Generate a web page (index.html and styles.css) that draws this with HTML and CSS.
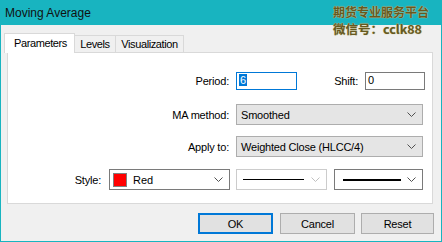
FILE: index.html
```html
<!DOCTYPE html>
<html>
<head>
<meta charset="utf-8">
<link rel="stylesheet" href="styles.css">
</head>
<body>
<div class="window">
  <div class="titlebar">
    <span class="title">Moving Average</span>
    <div class="watermark">
      <div class="wm1">期货专业服务平台</div>
      <div class="wm2">微信号：cclk88</div>
    </div>
  </div>
  <div class="tabs">
    <div class="tab active t1">Parameters</div>
    <div class="tab t2">Levels</div>
    <div class="tab t3">Visualization</div>
  </div>
  <div class="panel">
    <div class="row row1">
      <label class="lbl wide">Period:</label>
      <div class="input focus"><span class="sel">6</span></div>
      <label class="lbl shift">Shift:</label>
      <div class="input shiftin">0</div>
    </div>
    <div class="row row2">
      <label class="lbl wide">MA method:</label>
      <div class="combo full"><span>Smoothed</span><svg class="chev" width="9" height="5" viewBox="0 0 9 5"><polyline points="0.5,0.5 4.5,4.5 8.5,0.5" fill="none" stroke="#505050"/></svg></div>
    </div>
    <div class="row row3">
      <label class="lbl wide">Apply to:</label>
      <div class="combo full"><span>Weighted Close (HLCC/4)</span><svg class="chev" width="9" height="5" viewBox="0 0 9 5"><polyline points="0.5,0.5 4.5,4.5 8.5,0.5" fill="none" stroke="#505050"/></svg></div>
    </div>
    <div class="row row4">
      <label class="lbl short">Style:</label>
      <div class="wcombo color"><span class="swatch"></span><span>Red</span><svg class="chev" width="9" height="5" viewBox="0 0 9 5"><polyline points="0.5,0.5 4.5,4.5 8.5,0.5" fill="none" stroke="#505050"/></svg></div>
      <div class="wcombo line1 disabled"><span class="line thin"></span><svg class="chev" width="9" height="5" viewBox="0 0 9 5"><polyline points="0.5,0.5 4.5,4.5 8.5,0.5" fill="none" stroke="#c0c0c0"/></svg></div>
      <div class="wcombo line2"><span class="line thick"></span><svg class="chev" width="9" height="5" viewBox="0 0 9 5"><polyline points="0.5,0.5 4.5,4.5 8.5,0.5" fill="none" stroke="#505050"/></svg></div>
    </div>
  </div>
  <div class="buttons">
    <button class="btn ok">OK</button>
    <button class="btn cancel">Cancel</button>
    <button class="btn reset">Reset</button>
  </div>
</div>
</body>
</html>
```
FILE: styles.css
```css
* { box-sizing: border-box; }
html, body { margin: 0; padding: 0; background: #f0f0f0; }
body { font-family: "Liberation Sans", Arial, sans-serif; font-size: 11px; color: #000; }

.window {
  width: 442px; height: 242px;
  background: #f0f0f0;
  border: 1px solid #18b4c0;
  border-top: none;
  position: relative;
}
.titlebar {
  height: 25px;
  margin: 0 -1px;
  background: #18b4c0;
  position: relative;
  display: flex;
  align-items: center;
}
.title { font-size: 12px; color: #111; margin-left: 5px; margin-top: 1px; }

.watermark {
  position: absolute;
  right: 13px; top: 3px;
  font-family: "Noto Sans CJK SC", sans-serif;
  font-weight: bold;
  color: #66591f;
  text-shadow: 0 0 1px #cfc89a, 0 0 1px #cfc89a;
  text-align: right;
}
.wm1 { font-size: 12px; line-height: 17px; height: 17px; }
.wm2 { font-size: 12.5px; line-height: 18px; height: 18px; margin-right: 7px; }

.tabs {
  display: flex;
  align-items: flex-end;
  height: 19px;
  margin-top: 8px;
  margin-left: 3px;
  position: relative;
  z-index: 1;
}
.tab {
  height: 17px;
  border: 1px solid #d9d9d9;
  border-bottom: none;
  background: #f0f0f0;
  line-height: 16px;
  font-size: 11px;
  letter-spacing: -0.4px;
  text-align: center;
}
.tab + .tab { border-left: none; }
.t1 { width: 71px; }
.t2 { width: 41px; }
.t3 { width: 68px; }
.tab.active {
  height: 20px;
  margin-bottom: -1px;
  background: #fff;
  line-height: 18px;
  padding-left: 2px;
}

.panel {
  width: 426px; height: 152px;
  margin-left: 6px;
  background: #fff;
  border: 1px solid #d9d9d9;
  padding-top: 19px;
}
.row { display: flex; align-items: center; }
.row2 { margin-top: 14px; }
.row3 { margin-top: 11px; }
.row4 { margin-top: 12px; }

.lbl { text-align: right; letter-spacing: -0.2px; }
.lbl.wide { width: 221px; margin-right: 7px; }
.lbl.short { width: 93px; margin-right: 8px; }
.lbl.shift { width: 61px; margin-right: 7px; }

.input {
  width: 61px; height: 18px;
  border: 1px solid #7a7a7a;
  background: #fff;
  padding-left: 2px;
  line-height: 15px;
}
.input.focus { border-color: #0078d7; }
.input.shiftin { width: 60px; }
.sel { background: #0078d7; color: #fff; padding: 0 1px; }

.combo {
  height: 21px;
  background: #e5e5e5;
  border: 1px solid #adadad;
  display: flex; align-items: center;
  justify-content: space-between;
  padding: 0 6px 0 4px;
  letter-spacing: -0.2px;
}
.combo.full { width: 187px; }

.wcombo {
  height: 21px;
  background: #fff;
  border: 1px solid #7a7a7a;
  display: flex; align-items: center;
  padding: 0 6px 0 3px;
}
.wcombo .chev { margin-left: auto; }
.wcombo.color { width: 121px; margin-right: 6px; }
.wcombo.line1 { width: 91px; margin-right: 7px; border-color: #cccccc; padding-left: 6px; }
.wcombo.line2 { width: 89px; padding-left: 8px; }
.swatch {
  width: 14px; height: 14px;
  background: #ff0000;
  border: 1px solid #808080;
  margin-right: 6px;
}
.line { display: block; background: #000; }
.line.thin { width: 61px; height: 1px; }
.line.thick { width: 58px; height: 2px; }

.buttons {
  display: flex;
  justify-content: flex-end;
  margin-top: 9px;
  padding-right: 7px;
}
.btn {
  height: 21px;
  background: #e1e1e1;
  border: 1px solid #adadad;
  font-family: "Liberation Sans", Arial, sans-serif;
  font-size: 11px;
  color: #000;
  padding: 0;
  letter-spacing: -0.2px;
}
.btn.ok { width: 75px; margin-right: 7px; border: 2px solid #0078d7; }
.btn.cancel { width: 75px; margin-right: 6px; }
.btn.reset { width: 73px; }
```
